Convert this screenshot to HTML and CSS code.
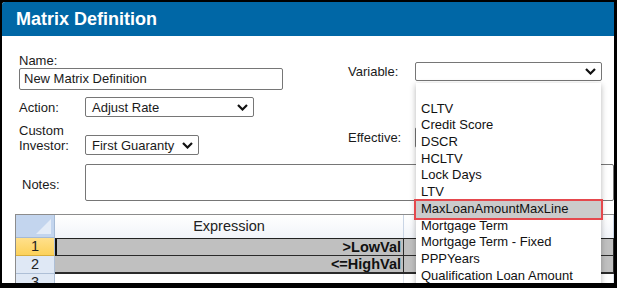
FILE: index.html
```html
<!DOCTYPE html>
<html lang="en">
<head>
  <meta charset="UTF-8" />
  <title>Matrix Definition</title>
  <link rel="stylesheet" href="styles.css">
</head>
<body>
  <div class="window">
    <div class="titlebar">Matrix Definition</div>

    <div class="form">
      <div class="form-top">
        <div class="col-left">
          <div class="label">Name:</div>
          <div class="input name-input">New Matrix Definition</div>

          <div class="row action-row">
            <span class="row-label">Action:</span>
            <div class="select action-select">
              <span>Adjust Rate</span>
              <svg class="chev" width="11" height="7" viewBox="0 0 11 7"><polyline points="1,1 5.5,5.5 10,1" /></svg>
            </div>
          </div>

          <div class="row investor-row">
            <span class="row-label">Custom<br>Investor:</span>
            <div class="select investor-select">
              <span>First Guaranty</span>
              <svg class="chev" width="11" height="7" viewBox="0 0 11 7"><polyline points="1,1 5.5,5.5 10,1" /></svg>
            </div>
          </div>
        </div>

        <div class="col-right">
          <div class="row variable-row">
            <span class="row-label wide">Variable:</span>
            <div class="select variable-select">
              <span></span>
              <svg class="chev" width="11" height="7" viewBox="0 0 11 7"><polyline points="1,1 5.5,5.5 10,1" /></svg>
            </div>
          </div>
          <div class="row effective-row">
            <span class="row-label wide">Effective:</span>
            <div class="input effective-input"></div>
          </div>
        </div>
      </div>

      <div class="row notes-row">
        <span class="row-label notes-label">Notes:</span>
        <div class="textarea"></div>
      </div>
    </div>

    <div class="grid">
      <div class="corner">
        <svg width="38" height="22" viewBox="0 0 38 22"><polygon points="35,4 35,19 20,19" /></svg>
      </div>
      <div class="col-head">Expression</div>
      <div class="col-head"></div>

      <div class="row-head active">1</div>
      <div class="cell first selected">&gt;LowVal</div>
      <div class="cell first"></div>

      <div class="row-head">2</div>
      <div class="cell">&lt;=HighVal</div>
      <div class="cell"></div>

      <div class="row-head">3</div>
      <div class="cell empty"></div>
      <div class="cell empty"></div>
    </div>

    <ul class="dropdown">
      <li>&nbsp;</li>
      <li>CLTV</li>
      <li>Credit Score</li>
      <li>DSCR</li>
      <li>HCLTV</li>
      <li>Lock Days</li>
      <li>LTV</li>
      <li class="hover">MaxLoanAmountMaxLine</li>
      <li>Mortgage Term</li>
      <li>Mortgage Term - Fixed</li>
      <li>PPPYears</li>
      <li>Qualification Loan Amount</li>
    </ul>
  </div>
</body>
</html>
```

FILE: styles.css
```css
* {
  box-sizing: border-box;
}
body {
  margin: 0;
  background: #000;
  font-family: "Liberation Sans", Arial, sans-serif;
  font-size: 13px;
  color: #1a1a1a;
}
.window {
  position: relative;
  margin: 2px 3px 0 2px;
  height: 281px;
  background: #fff;
  overflow: hidden;
  border-top-left-radius: 3px;
}
.titlebar {
  height: 34px;
  line-height: 34px;
  padding-left: 14px;
  background: #0067a6;
  color: #fff;
  font-size: 18px;
  font-weight: bold;
}

.form {
  padding: 17px 0 0 17px;
}
.form-top {
  display: flex;
}
.col-left {
  width: 329px;
}
.label {
  line-height: 15px;
}
.input,
.select,
.textarea {
  border: 1px solid #767676;
  border-radius: 2px;
  background: #fff;
}
.input {
  line-height: 20px;
  padding-left: 4px;
}
.name-input {
  width: 264px;
  height: 22px;
}
.row {
  display: flex;
  align-items: center;
  line-height: 15px;
}
.row-label {
  width: 66px;
  flex-shrink: 0;
}
.row-label.wide {
  width: 67px;
}
.select {
  display: flex;
  align-items: center;
  justify-content: space-between;
  padding: 0 5px 0 6px;
}
.chev {
  flex-shrink: 0;
}
.chev polyline {
  fill: none;
  stroke: #111;
  stroke-width: 2.2;
}
.action-row {
  margin-top: 7px;
}
.action-select {
  width: 169px;
  height: 20px;
}
.investor-row {
  margin-top: 6px;
  align-items: flex-start;
}
.investor-select {
  width: 114px;
  height: 20px;
  margin-top: 12px;
}

.col-right {
  padding-top: 9px;
}
.variable-select {
  width: 187px;
  height: 19px;
}
.effective-row {
  margin-top: 46px;
}
.effective-input {
  width: 120px;
  height: 21px;
}

.notes-row {
  margin-top: 9px;
  align-items: flex-start;
}
.notes-label {
  padding-left: 3px;
  margin-top: 13px;
}
.textarea {
  width: 560px;
  height: 37px;
}

.grid {
  display: grid;
  grid-template-columns: 39px 349px 1fr;
  grid-template-rows: 23px 18px 18px 18px;
  margin: 13px 0 0 13px;
  border-top: 1px solid #8c8c8c;
  border-left: 1px solid #8c8c8c;
  font-size: 14.5px;
}
.corner {
  background: #c3d5ee;
  border-right: 1px solid #a5bad5;
  border-bottom: 1px solid #a5bad5;
}
.corner svg {
  display: block;
}
.corner polygon {
  fill: #e4ecf7;
}
.col-head {
  background: linear-gradient(#ffffff, #f1f4f9);
  border-right: 1px solid #c9d5e5;
  text-align: center;
  line-height: 22px;
  color: #222;
}
.row-head {
  background: #dfe8f5;
  border-bottom: 1px solid #aebfd6;
  border-right: 1px solid #aebfd6;
  text-align: center;
  line-height: 17px;
  color: #222;
}
.row-head.active {
  background: linear-gradient(#ffe08c, #fcd15a);
  border-bottom-color: #d8ae3c;
}
.cell {
  background: #c0c0c0;
  border-bottom: 2px solid #2a2a2a;
  border-right: 1px solid #2a2a2a;
  text-align: right;
  font-weight: bold;
  padding: 1px 2px 0 0;
  line-height: 15px;
  color: #111;
}
.cell.first {
  border-top: 1px solid #222;
  border-bottom-width: 1px;
}
.cell.selected {
  border-left: 2px solid #111;
}
.cell.empty {
  background: #fff;
  border: none;
  border-right: 1px solid #dde3ec;
}

.dropdown {
  position: absolute;
  left: 414px;
  top: 81px;
  width: 185px;
  height: 220px;
  margin: 0;
  padding: 1px 0 0 0;
  list-style: none;
  background: #fff;
  box-shadow: 0 2px 6px rgba(0, 0, 0, 0.3);
  z-index: 2;
}
.dropdown li {
  height: 16.7px;
  line-height: 16.7px;
  padding-left: 5px;
  color: #111;
  white-space: nowrap;
}
.dropdown li.hover {
  background: #cbcbcb;
  outline: 2px solid #e5484d;
  outline-offset: 0;
}
```
